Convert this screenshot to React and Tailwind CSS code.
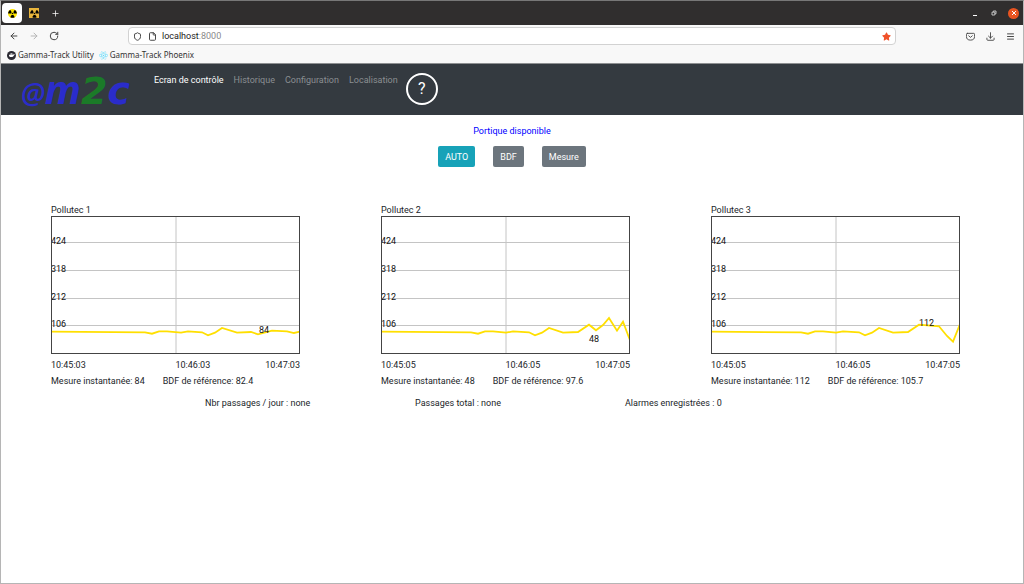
import { ArrowLeft, ArrowRight, File, Menu, Plus, RotateCw, Shield } from 'lucide-react';
import { FaDocker, FaRadiation, FaReact, FaStar } from 'react-icons/fa';

const navLinks = ['Historique', 'Configuration', 'Localisation'];

const gridLines = [
  { y: 26.5, label: '424', base: 28 },
  { y: 54.5, label: '318', base: 56 },
  { y: 82.5, label: '212', base: 84 },
  { y: 109.5, label: '106', base: 111 },
];

const trunk =
  '0,115.7 90,116.3 97,117.7 104,115.3 112,115.3 125,116.7 132,115.3 148,116.3 154,119.3 161,116.7 168,112 182,116.7 197,116 208,108.7 ';

const sensors = [
  {
    name: 'Pollutec 1',
    value: 84,
    valueY: 117,
    bdf: '82.4',
    times: ['10:45:03', '10:46:03', '10:47:03'],
    points:
      '0,115.7 94,116.3 101,117.7 108,115.3 116,115.3 130,116.7 137,115.3 151,116.3 157,119.3 164,116.7 171,112 186,116.7 200,116 207,118.3 221,114.7 236,115.3 243,117 249,115.7',
  },
  {
    name: 'Pollutec 2',
    value: 48,
    valueY: 126,
    bdf: '97.6',
    times: ['10:45:05', '10:46:05', '10:47:05'],
    points: trunk + '215,114.3 222,109 228,102 236,114.7 242,105.7 249,124.3',
  },
  {
    name: 'Pollutec 3',
    value: 112,
    valueY: 110,
    bdf: '105.7',
    times: ['10:45:05', '10:46:05', '10:47:05'],
    points: trunk + '228,110.3 236,120 242,125.7 249,108',
  },
];

function PocketIcon() {
  return (
    <svg viewBox="0 0 10 10" className="size-[9px]" fill="none" stroke="currentColor" strokeLinecap="round" strokeLinejoin="round">
      <path d="M1.5 1.5h7a1 1 0 0 1 1 1V5a4.5 4 0 0 1-9 0V2.5a1 1 0 0 1 1-1Z" />
      <path d="M3 4.2 5 6l2-1.8" />
    </svg>
  );
}

function DownloadIcon() {
  return (
    <svg viewBox="0 0 10 10" className="size-[9px]" fill="none" stroke="currentColor" strokeLinecap="round" strokeLinejoin="round">
      <path d="M5 .8v6M2.8 4.6 5 6.8l2.2-2.2M1 6.8v1.4a1 1 0 0 0 1 1h6a1 1 0 0 0 1-1V6.8" />
    </svg>
  );
}

function TabBar() {
  return (
    <div className="flex h-6 items-center bg-[#302e2e] pr-1 pl-px text-white">
      <button aria-label="Ecran de contrôle" className="flex size-5 items-center justify-center rounded-sm bg-white">
        <span className="flex size-[9px] items-center justify-center rounded-full bg-[#ffe600]">
          <FaRadiation className="size-[9px] text-black" />
        </span>
      </button>
      <button aria-label="Gamma-Track" className="ml-[7px] flex size-[10px] items-center justify-center bg-[#e9b53c]">
        <FaRadiation className="size-[9px] text-black" />
      </button>
      <button aria-label="Nouvel onglet" className="ml-3">
        <Plus className="size-[9px]" />
      </button>
      <div className="ml-auto flex items-center">
        <button aria-label="Réduire" className="mr-[14px] flex h-2 w-1 items-end">
          <span className="mb-px h-px w-1 bg-white" />
        </button>
        <button aria-label="Restaurer" className="mr-[11px]">
          <svg viewBox="0 0 6 6" className="size-[6px]" fill="none" stroke="#d0d0d0" strokeWidth="0.9">
            <path d="M1 2.2h2.8V5H1zM2.3 2V1H5v2.8H4" />
          </svg>
        </button>
        <button aria-label="Fermer" className="flex size-[11px] items-center justify-center rounded-full bg-[#e95420]">
          <svg viewBox="0 0 6 6" className="size-[6px]" fill="none" stroke="#fff">
            <path d="m1 1 4 4M5 1 1 5" />
          </svg>
        </button>
      </div>
    </div>
  );
}

function Toolbar() {
  return (
    <div className="flex h-[22px] items-center bg-[#f8f8f8] px-2 text-[#444]">
      <button aria-label="Précédent">
        <ArrowLeft className="size-[10px]" strokeWidth={2.4} />
      </button>
      <button aria-label="Suivant" className="ml-[10px] text-[#b5b5b5]">
        <ArrowRight className="size-[10px]" strokeWidth={2.4} />
      </button>
      <button aria-label="Actualiser" className="ml-[10px]">
        <RotateCw className="size-[10px]" strokeWidth={2.4} />
      </button>
      <div className="mr-[70px] ml-[69px] flex h-[18px] flex-1 items-center rounded-sm border border-[#d2d2d2] bg-white px-1">
        <Shield className="size-[9px]" strokeWidth={2.6} />
        <File className="ml-[6px] size-[9px]" strokeWidth={2.6} />
        <div className="ml-[5px] text-[9px] leading-3 text-[#8a8a8a]">
          <span className="text-[#1a1a1a]">localhost</span>:8000
        </div>
        <button aria-label="Marque-page" className="ml-auto text-[#f0522a]">
          <FaStar className="size-[9px]" />
        </button>
      </div>
      <div className="flex gap-[11px]">
        <button aria-label="Pocket">
          <PocketIcon />
        </button>
        <button aria-label="Téléchargements">
          <DownloadIcon />
        </button>
        <button aria-label="Menu">
          <Menu className="size-[9px]" strokeWidth={2.6} />
        </button>
      </div>
    </div>
  );
}

function Bookmarks() {
  return (
    <div className="flex h-[17px] items-center border-b border-[#8d8f91] bg-[#f8f8f8] pl-[6px] font-['Noto_Sans',sans-serif] text-[8px] leading-3 text-[#333]">
      <a href="#utility" className="flex items-center gap-[2px]">
        <span className="flex size-[9px] items-center justify-center rounded-full bg-[#2b2a33]">
          <FaDocker className="size-[6px] text-white" />
        </span>
        Gamma-Track Utility
      </a>
      <a href="#phoenix" className="ml-[5px] flex items-center gap-[2px]">
        <FaReact className="size-[9px] text-[#61dafb]" />
        Gamma-Track Phoenix
      </a>
    </div>
  );
}

function Navbar() {
  return (
    <nav className="flex h-[51px] items-start bg-[#343a40] pl-5 text-[9px] leading-3">
      <a
        href="#accueil"
        className="flex h-[51px] w-[107px] items-baseline pt-[7px] font-['Open_Sans',sans-serif] text-[40px] leading-9 font-bold text-[#2a2ccb] italic"
      >
        <span className="text-[28px] font-semibold">@</span>m
        <span className="font-['DejaVu_Sans',sans-serif] text-[38px] text-[#1b7a28]">2</span>
        <span className="font-['DejaVu_Sans',sans-serif] text-[38px]">c</span>
      </a>
      <div className="ml-[26px] flex gap-[10px] pt-[10px] text-[#8b8f92]">
        <a href="#controle" className="text-white">
          Ecran de contrôle
        </a>
        {navLinks.map((link) => (
          <a key={link} href={'#' + link.toLowerCase()}>
            {link}
          </a>
        ))}
      </div>
      <button
        aria-label="Aide"
        className="mt-[9px] ml-2 flex size-[32px] items-center justify-center rounded-full border-2 border-white text-base text-white"
      >
        ?
      </button>
    </nav>
  );
}

function Sensor({ sensor }) {
  return (
    <section>
      <h2>{sensor.name}</h2>
      <svg viewBox="0 0 249 138" className="block w-full text-[9px]">
        <path d="M125 0v138" stroke="#c4c4c4" />
        {gridLines.map((line) => (
          <g key={line.label}>
            <path d={`M0 ${line.y}h249`} stroke="#c4c4c4" />
            <text x="0" y={line.base} fill="#111">
              {line.label}
            </text>
          </g>
        ))}
        <polyline points={sensor.points} fill="none" stroke="#ffdf00" strokeWidth="1.8" />
        <text x="208" y={sensor.valueY} fill="#111">
          {sensor.value}
        </text>
        <rect x="0.5" y="0.5" width="248" height="137" fill="none" stroke="#444" />
      </svg>
      <div className="mt-[5px] grid grid-cols-4">
        <span className="col-span-2">{sensor.times[0]}</span>
        <span>{sensor.times[1]}</span>
        <span className="text-right">{sensor.times[2]}</span>
      </div>
      <div className="mt-1 flex gap-[18px]">
        <span>Mesure instantanée: {sensor.value}</span>
        <span>BDF de référence: {sensor.bdf}</span>
      </div>
    </section>
  );
}

export default function App() {
  return (
    <div className="min-h-screen border border-[#b5b5b5] border-t-[#777] bg-white font-[Roboto,sans-serif] text-[9px] leading-3 text-[#212529]">
      <TabBar />
      <Toolbar />
      <Bookmarks />
      <Navbar />
      <main className="pt-[10px]">
        <p className="text-center text-[#0000ff]">Portique disponible</p>
        <div className="mt-[9px] flex justify-center gap-[18px] text-white">
          <button className="h-[21px] rounded-xs bg-[#17a2b8] px-[7px]">AUTO</button>
          <button className="h-[21px] rounded-xs bg-[#6c757d] px-[7px]">BDF</button>
          <button className="h-[21px] rounded-xs bg-[#6c757d] px-[7px]">Mesure</button>
        </div>
        <div className="mt-[37px] grid grid-cols-3 gap-[81px] pr-[63px] pl-[50px]">
          {sensors.map((sensor) => (
            <Sensor key={sensor.name} sensor={sensor} />
          ))}
        </div>
        <div className="mt-[10px] grid grid-cols-3 pr-[188px] pl-[204px]">
          <span>Nbr passages / jour : none</span>
          <span>Passages total : none</span>
          <span>Alarmes enregistrées : 0</span>
        </div>
      </main>
    </div>
  );
}
